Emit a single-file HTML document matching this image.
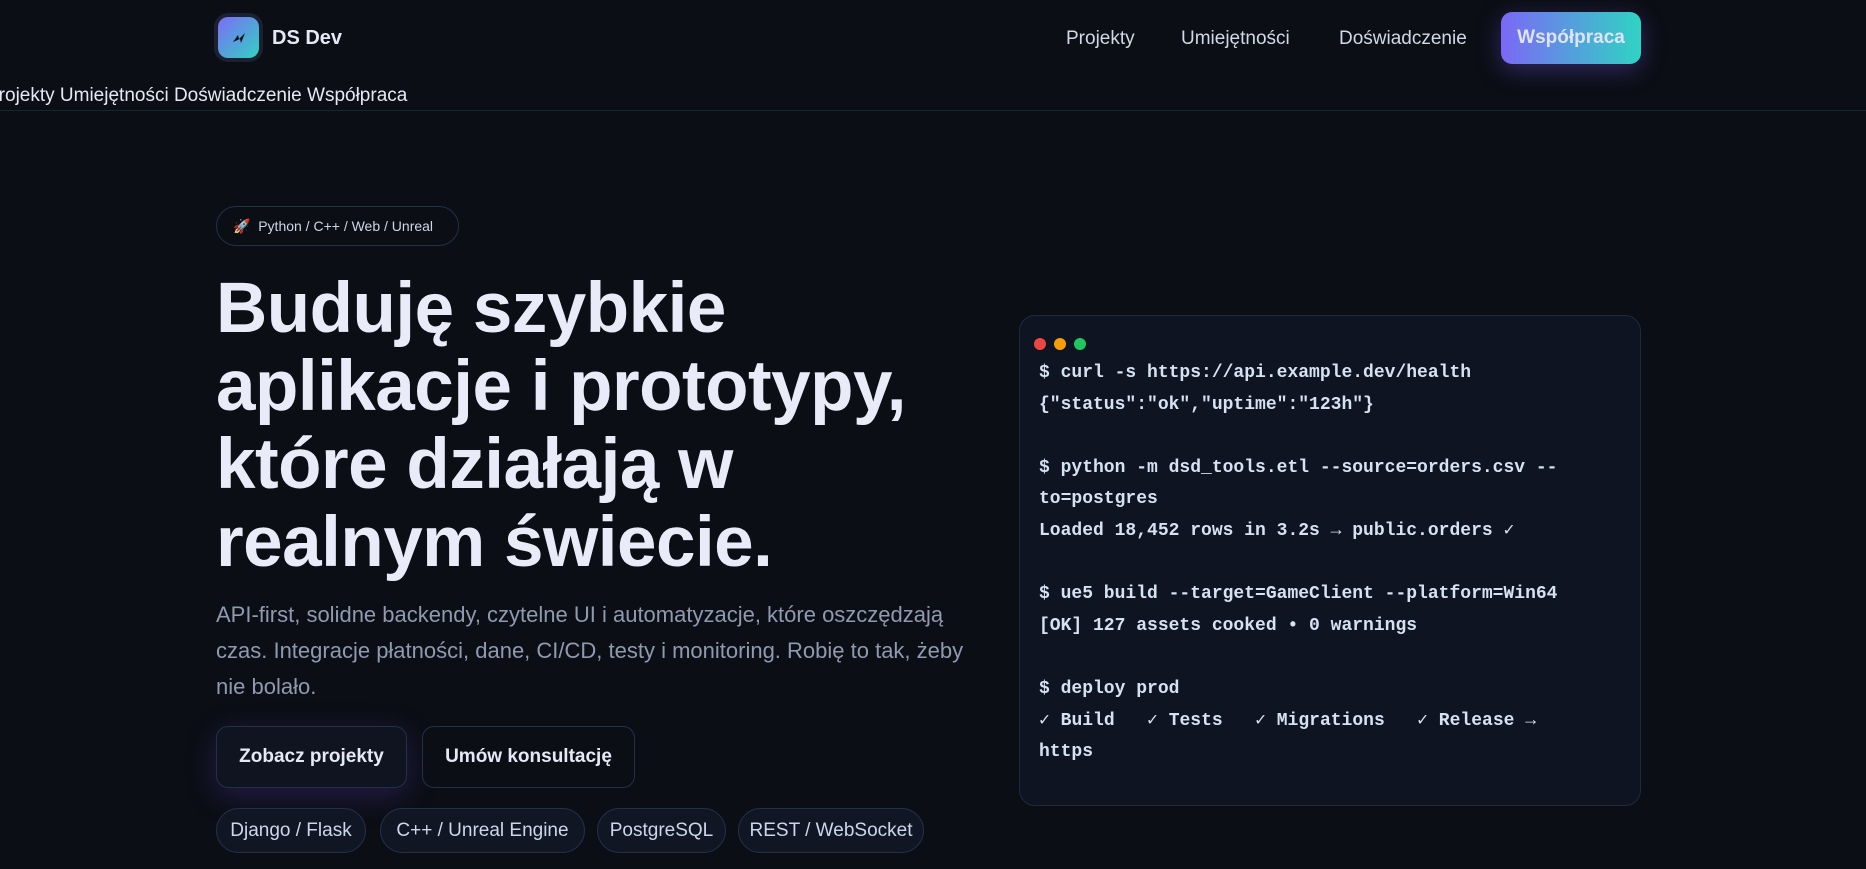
<!DOCTYPE html>
<html><head><meta charset="utf-8"><style>
*{margin:0;padding:0;box-sizing:border-box}
html,body{width:1866px;height:869px;overflow:hidden;background:#0b0e15;color:#e6e9f5;font-family:"Liberation Sans",sans-serif}
.abs{position:absolute}
.logo{left:214px;top:13px;width:49px;height:49px;border-radius:14px;background:#1b2130;padding:4px}
.logo div{width:100%;height:100%;border-radius:10px;background:linear-gradient(135deg,#7c6cf5,#31d2c4);display:flex;align-items:center;justify-content:center}
.brand{left:272px;top:27px;font-size:20px;font-weight:700}
.nav{top:28px;font-size:19px;color:#d3d8e6}
.cta{left:1501px;top:12px;width:140px;height:52px;border-radius:11px;background:linear-gradient(90deg,#7b68f6,#2fd4c3);color:#dfe3f5;font-weight:700;font-size:19px;display:flex;align-items:center;justify-content:center;box-shadow:0 6px 24px rgba(120,90,240,.35)}
.line2{left:-14px;top:85px;font-size:19px;color:#e6e9f5;white-space:nowrap}
.hr{left:0;top:110px;width:1866px;height:1px;background:#1c2433}
.badge{left:216px;top:206px;width:243px;height:40px;border:1px solid #233048;border-radius:20px;font-size:14px;color:#cfd5e6;display:flex;align-items:center;padding-left:16px}
h1{position:absolute;left:216px;top:270px;font-size:71px;line-height:78px;font-weight:700;color:#e9ebf8;letter-spacing:-.5px}
.p{left:216px;top:597px;width:765px;font-size:22px;line-height:36px;color:#8f9ab0}
.btn{top:726px;height:62px;border:1px solid #233048;border-radius:12px;font-size:19px;font-weight:700;display:flex;align-items:center;justify-content:center;background:#0f1420}
.tag{top:808px;height:45px;border:1px solid #233048;border-radius:23px;font-size:19px;color:#cdd6ea;display:flex;align-items:center;justify-content:center;background:#101624}
.term{left:1019px;top:315px;width:622px;height:491px;border:1px solid #1f2a3d;border-radius:16px;background:#0e1422}
.dot{top:338px;width:12px;height:12px;border-radius:50%}
.code{left:1039px;top:358px;font-family:"Liberation Mono",monospace;font-weight:700;font-size:18px;line-height:31.6px;color:#d6e2f2;white-space:pre}
</style></head><body>
<div class="abs logo"><div><svg width="20" height="20" viewBox="0 0 20 20"><path d="M4 14 L9 7 L10 11 L16 5 L12 15 L11 11 Z" fill="#111"/></svg></div></div>
<div class="abs brand">DS Dev</div>
<div class="abs nav" style="left:1066px">Projekty</div>
<div class="abs nav" style="left:1181px">Umiejętności</div>
<div class="abs nav" style="left:1339px">Doświadczenie</div>
<div class="abs cta">Współpraca</div>
<div class="abs line2">Projekty Umiejętności Doświadczenie Współpraca</div>
<div class="abs hr"></div>
<div class="abs badge">🚀&nbsp; Python / C++ / Web / Unreal</div>
<h1>Buduję szybkie<br>aplikacje i prototypy,<br>które działają w<br>realnym świecie.</h1>
<div class="abs p">API-first, solidne backendy, czytelne UI i automatyzacje, które oszczędzają czas. Integracje płatności, dane, CI/CD, testy i monitoring. Robię to tak, żeby nie bolało.</div>
<div class="abs btn" style="left:216px;width:191px;box-shadow:0 8px 30px rgba(110,70,220,.25)">Zobacz projekty</div>
<div class="abs btn" style="left:422px;width:213px;background:#0b0e15">Umów konsultację</div>
<div class="abs tag" style="left:216px;width:150px">Django / Flask</div>
<div class="abs tag" style="left:380px;width:205px">C++ / Unreal Engine</div>
<div class="abs tag" style="left:597px;width:129px">PostgreSQL</div>
<div class="abs tag" style="left:738px;width:186px">REST / WebSocket</div>
<div class="abs term"></div>
<div class="abs dot" style="left:1034px;background:#ef4444"></div>
<div class="abs dot" style="left:1054px;background:#f59e0b"></div>
<div class="abs dot" style="left:1074px;background:#22c55e"></div>
<div class="abs code">$ curl -s https://api.example.dev/health
{"status":"ok","uptime":"123h"}

$ python -m dsd_tools.etl --source=orders.csv --
to=postgres
Loaded 18,452 rows in 3.2s → public.orders ✓

$ ue5 build --target=GameClient --platform=Win64
[OK] 127 assets cooked • 0 warnings

$ deploy prod
✓ Build   ✓ Tests   ✓ Migrations   ✓ Release →
https</div>
</body></html>
